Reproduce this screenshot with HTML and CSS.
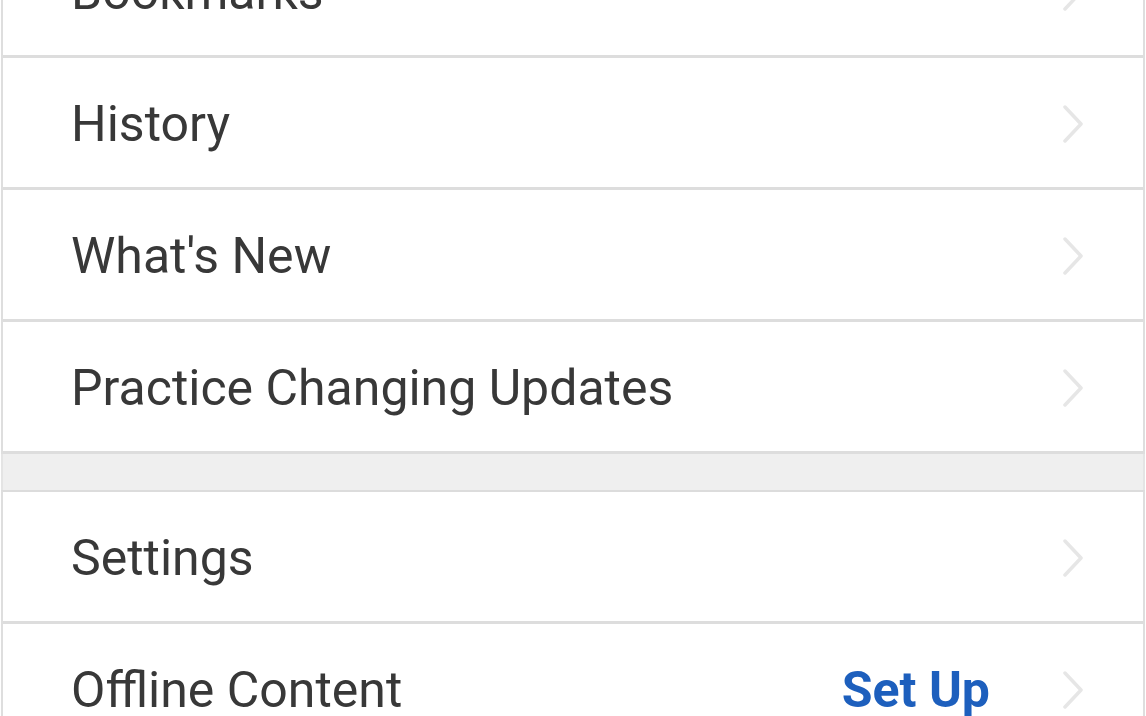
FILE: index.html
```html
<!DOCTYPE html>
<html>
<head>
<meta charset="utf-8">
<link rel="stylesheet" href="styles.css">
</head>
<body>
<div class="page">
  <ul class="group first">
    <li class="row"><span class="label">Bookmarks</span><svg class="chev" viewBox="0 0 20 38"><polyline points="2,2 18,19 2,36"/></svg></li>
    <li class="row"><span class="label">History</span><svg class="chev" viewBox="0 0 20 38"><polyline points="2,2 18,19 2,36"/></svg></li>
    <li class="row"><span class="label">What's New</span><svg class="chev" viewBox="0 0 20 38"><polyline points="2,2 18,19 2,36"/></svg></li>
    <li class="row"><span class="label">Practice Changing Updates</span><svg class="chev" viewBox="0 0 20 38"><polyline points="2,2 18,19 2,36"/></svg></li>
  </ul>
  <div class="spacer"></div>
  <ul class="group second">
    <li class="row"><span class="label">Settings</span><svg class="chev" viewBox="0 0 20 38"><polyline points="2,2 18,19 2,36"/></svg></li>
    <li class="row"><span class="label">Offline Content</span><span class="action">Set Up</span><svg class="chev" viewBox="0 0 20 38"><polyline points="2,2 18,19 2,36"/></svg></li>
  </ul>
</div>
</body>
</html>
```

FILE: styles.css
```css
html, body {
  margin: 0;
  padding: 0;
  background: #ffffff;
  overflow: hidden;
}

.page {
  margin: 0 1px;
  font-family: Roboto, "Noto Sans", sans-serif;
  color: #383838;
}

.group {
  list-style: none;
  margin: 0;
  padding: 0;
  background: #ffffff;
  border-left: 2px solid #dedede;
  border-right: 2px solid #dedede;
}

.group.first {
  margin-top: -74px;
}

.group.second {
  border-top: 2px solid #dcdcdc;
}

.row {
  display: flex;
  align-items: center;
  height: 132px;
  padding: 3px 60px 0 68px;
  box-sizing: border-box;
  border-bottom: 3px solid #dddddd;
}

.label {
  flex: 1;
  font-size: 50px;
  line-height: 1;
  white-space: nowrap;
}

.action {
  font-size: 50px;
  font-weight: 700;
  color: #1d5fbd;
  margin-right: 73px;
  line-height: 1;
}

.chev {
  width: 20px;
  height: 38px;
  flex: none;
}

.chev polyline {
  fill: none;
  stroke: #e6e6e6;
  stroke-width: 3.5;
  stroke-linecap: round;
  stroke-linejoin: round;
}

.spacer {
  height: 36px;
  background: #efefef;
  border-left: 2px solid #e4e4e4;
  border-right: 2px solid #e4e4e4;
}
```
